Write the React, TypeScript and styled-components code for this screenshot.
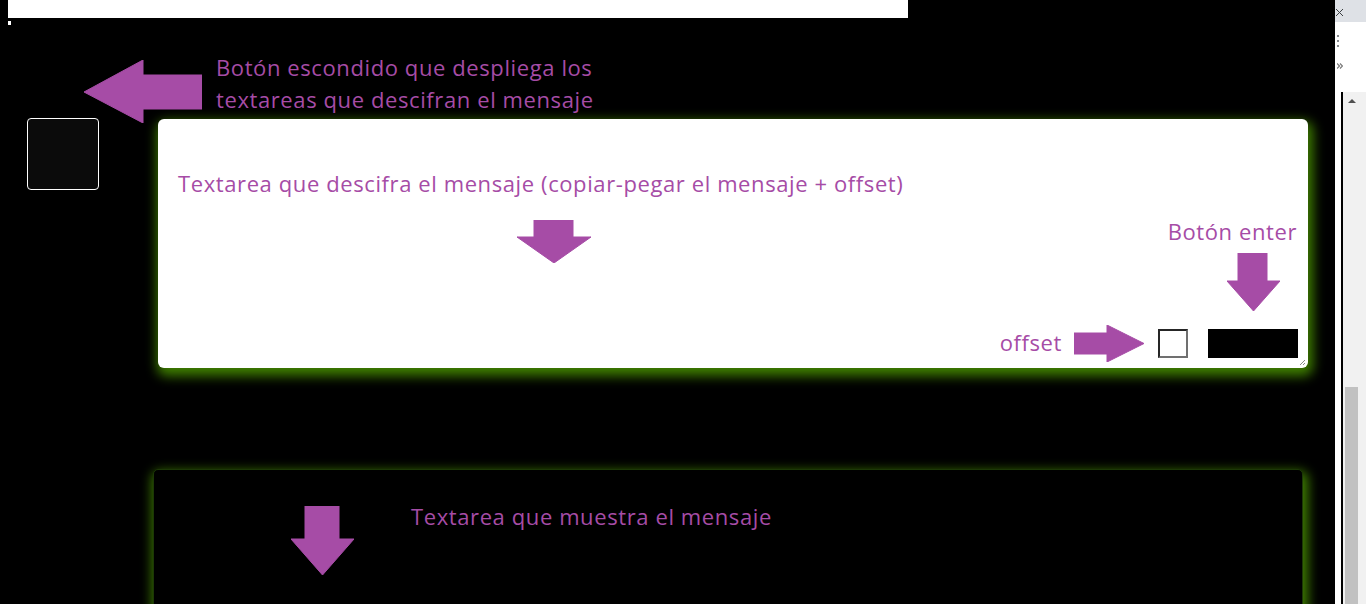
import React from "react";
import styled, { createGlobalStyle } from "styled-components";

const PURPLE = "#a64ca6";

const Global = createGlobalStyle`
  html, body { margin: 0; padding: 0; background: #000; overflow: hidden; }
  body { font-family: "Open Sans", "Noto Sans", sans-serif; }
  * { box-sizing: border-box; }
`;

const Page = styled.div`
  display: flex;
  width: 100%;
  height: 604px;
  overflow: hidden;
`;

const Main = styled.main`
  position: relative;
  flex: 1;
  min-width: 0;
  background: #000;
`;

const TopStrip = styled.div`
  margin-left: 8px;
  width: 900px;
  height: 18px;
  background: #fff;
`;

const Speck = styled.div`
  margin: 3px 0 0 8px;
  width: 3px;
  height: 4px;
  background: #fff;
`;

const Row = styled.div`
  display: flex;
  align-items: flex-start;
  margin-top: 93px;
  padding-left: 27px;
`;

const HiddenButton = styled.button`
  width: 72px;
  height: 72px;
  border: 1px solid #fff;
  border-radius: 4px;
  background: #0b0b0b;
  padding: 0;
`;

const DecodePanel = styled.div`
  position: relative;
  display: flex;
  flex-direction: column;
  margin: 1px 0 0 59px;
  width: 1150px;
  height: 249px;
  padding: 50px 10px 10px 20px;
  background: #fff;
  border-radius: 6px;
  box-shadow: 2px 5px 12px 3px #3f7f00;
`;

const Note = styled.div<{ $lh?: number }>`
  color: ${PURPLE};
  font-size: 22px;
  letter-spacing: 0.6px;
  line-height: ${(p) => p.$lh ?? 28}px;
  white-space: nowrap;
`;

const Body = styled.div`
  flex: 1;
  display: flex;
  justify-content: space-between;
`;

const Controls = styled.div`
  display: flex;
  align-items: flex-end;
  align-self: flex-end;
`;

const EnterColumn = styled.div`
  display: flex;
  flex-direction: column;
  align-items: flex-end;
  width: 90px;
  margin-left: 20px;
`;

const Checkbox = styled.span`
  display: block;
  width: 30px;
  height: 29px;
  margin-left: 14px;
  border: 2px solid;
  border-color: #262626 #707070 #707070 #262626;
  background: #fff;
`;

const EnterButton = styled.button`
  display: block;
  width: 90px;
  height: 29px;
  border: none;
  padding: 0;
  background: #000;
`;

const Resize = styled.svg`
  position: absolute;
  right: 2px;
  bottom: 2px;
`;

const ShowPanel = styled.div`
  display: flex;
  align-items: flex-start;
  margin: 101px 0 0 153px;
  width: 1150px;
  height: 220px;
  padding: 36px 0 0 137px;
  background: #000;
  border: 1px solid #1c3806;
  border-radius: 5px;
  box-shadow: 2px 5px 12px 3px #3f7f00;
`;

const Callout = styled.div`
  position: absolute;
  left: 84px;
  top: 51px;
  display: flex;
  align-items: flex-start;
`;

const Arrow = styled.svg<{ $m?: string }>`
  display: block;
  flex: none;
  margin: ${(p) => p.$m ?? "0"};
  fill: ${PURPLE};
  stroke: ${PURPLE};
  stroke-width: 1;
  stroke-linejoin: round;
`;

const Side = styled.aside`
  display: flex;
  flex-direction: column;
  width: 31px;
  flex: none;
  background: #fff;
`;

const SideHead = styled.div`
  height: 22px;
  background: #dee1e6;
  padding-left: 1px;
`;

const SideBody = styled.div`
  height: 70px;
  display: flex;
  flex-direction: column;
  padding: 13px 0 0 2px;
  gap: 16px;
`;

const Dots = styled.div`
  display: flex;
  flex-direction: column;
  gap: 3px;
  & > i {
    display: block;
    width: 2px;
    height: 2px;
    background: #5f6368;
    border-radius: 1px;
  }
`;

const ScrollArea = styled.div`
  flex: 1;
  display: flex;
`;

const Gap = styled.div`
  width: 6px;
  background: #fff;
`;

const Rule = styled.div`
  width: 2px;
  background: #000;
`;

const Track = styled.div`
  flex: 1;
  display: flex;
  flex-direction: column;
  background: #f1f1f1;
  padding-left: 2px;
`;

const UpArrow = styled.div`
  margin: 7px 0 0 3px;
  width: 0;
  height: 0;
  border-left: 4px solid transparent;
  border-right: 4px solid transparent;
  border-bottom: 4px solid #505050;
`;

const Thumb = styled.div`
  margin-top: 284px;
  width: 13px;
  flex: 1;
  background: #c1c1c1;
`;

export default function App() {
  return (
    <>
      <Global />
      <Page>
        <Main>
          <TopStrip />
          <Speck />
          <Row>
            <HiddenButton aria-label="mostrar" />
            <DecodePanel>
              <Note>Textarea que descifra el mensaje (copiar-pegar el mensaje + offset)</Note>
              <Body>
                <Arrow $m="23px 0 0 339px" width="74" height="43" viewBox="0 0 74 43">
                  <polygon points="17,0 56,0 56,17 74,17 37,43 0,17 17,17" />
                </Arrow>
                <Controls>
                  <Note style={{ marginBottom: 2 }}>offset</Note>
                  <Arrow $m="0 0 -4px 12px" width="70" height="37" viewBox="0 0 70 37">
                    <polygon points="0,8 33,8 33,0 70,18.5 33,37 33,29 0,29" />
                  </Arrow>
                  <Checkbox />
                  <EnterColumn>
                    <Note style={{ marginRight: 1, marginTop: 4 }}>Botón enter</Note>
                    <Arrow $m="8px 18px 18px 0" width="53" height="58" viewBox="0 0 53 58">
                      <polygon points="11,0 40,0 40,28 53,28 26.5,58 0,28 11,28" />
                    </Arrow>
                    <EnterButton aria-label="enter" />
                  </EnterColumn>
                </Controls>
              </Body>
              <Resize width="7" height="7" viewBox="0 0 7 7">
                <path d="M6 1 L1 6 M6 4 L4 6" stroke="#8a8a8a" strokeWidth="1" />
              </Resize>
            </DecodePanel>
          </Row>
          <ShowPanel>
            <Arrow width="63" height="69" viewBox="0 0 63 69">
              <polygon points="14,0 48,0 48,33 63,33 31.5,69 0,33 14,33" />
            </Arrow>
            <Note style={{ marginLeft: 57, marginTop: -4 }}>Textarea que muestra el mensaje</Note>
          </ShowPanel>
          <Callout>
            <Arrow $m="9px 14px 0 0" width="118" height="63" viewBox="0 0 118 63">
              <polygon points="0,32 59,0 59,15 118,15 118,49 59,49 59,63" />
            </Arrow>
            <Note $lh={32}>
              Botón escondido que despliega los
              <br />
              textareas que descifran el mensaje
            </Note>
          </Callout>
        </Main>
        <Side>
          <SideHead>
            <svg width="8" height="8" viewBox="0 0 8 8">
              <path d="M0 0 L7 7 M7 0 L0 7" stroke="#3c4043" strokeWidth="1" />
            </svg>
          </SideHead>
          <SideBody>
            <Dots>
              <i />
              <i />
              <i />
            </Dots>
            <svg width="6" height="6" viewBox="0 0 6 6">
              <path d="M0 0.5 L2.5 3 L0 5.5 M3 0.5 L5.5 3 L3 5.5" stroke="#777" strokeWidth="1.2" fill="none" />
            </svg>
          </SideBody>
          <ScrollArea>
            <Gap />
            <Rule />
            <Track>
              <UpArrow />
              <Thumb />
            </Track>
          </ScrollArea>
        </Side>
      </Page>
    </>
  );
}
